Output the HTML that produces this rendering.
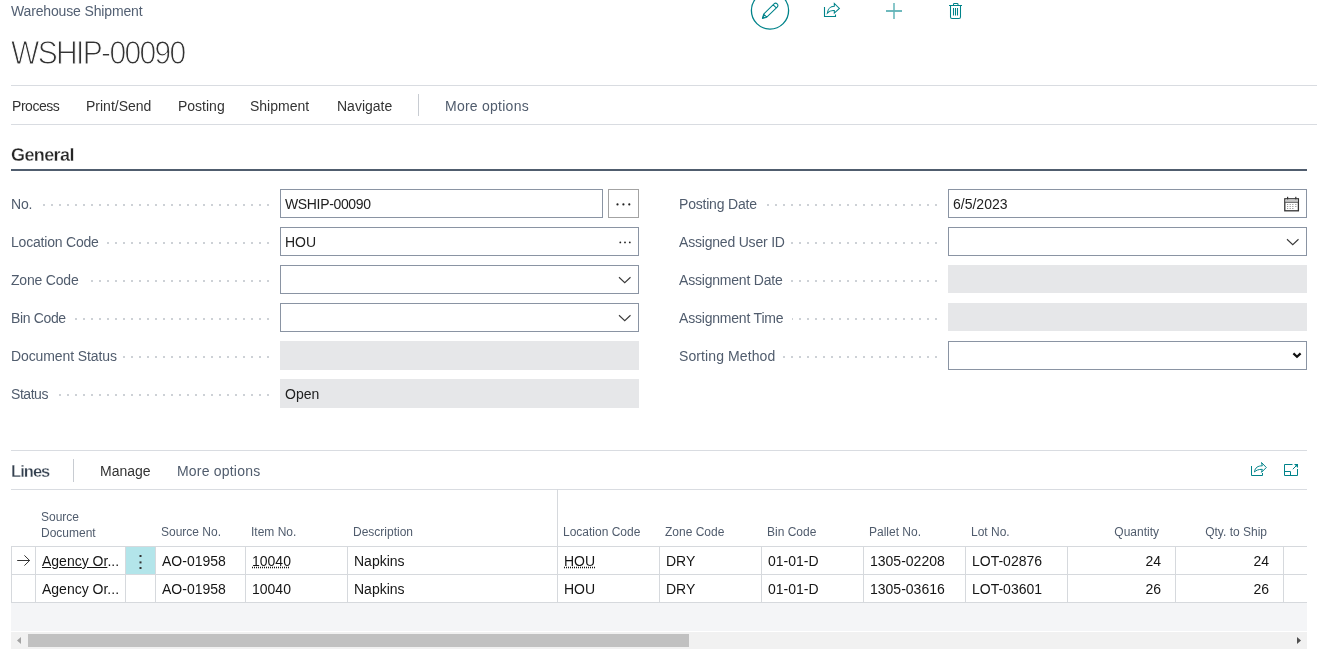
<!DOCTYPE html>
<html><head><meta charset="utf-8">
<style>
*{box-sizing:border-box;margin:0;padding:0}
html,body{width:1317px;height:662px;overflow:hidden;background:#fff}
body{position:relative;font-family:"Liberation Sans",sans-serif;color:#212121}
.a{position:absolute;white-space:nowrap;line-height:1}
.hl{position:absolute;height:1px;background:#d9dce1}
.lbl{font-size:14px;color:#505c6d}
.dots{position:absolute;height:2px;background:linear-gradient(to right,transparent 6px,#cdd1d6 6px) repeat-x right top;background-size:8px 2px}
.lb{position:absolute;background:#fff;padding-right:7px;letter-spacing:-0.2px;font-size:14px;color:#505c6d;line-height:1;white-space:nowrap}
.box{position:absolute;height:29px;border:1px solid #8a94a3;background:#fff}
.ro{position:absolute;height:29px;background:#e6e7e9}
.val{position:absolute;font-size:14px;color:#212121;line-height:1;white-space:nowrap}
.menu{font-size:14px;color:#333}
.gl{position:absolute;background:#d6d9dd}
.th{position:absolute;font-size:12px;color:#505c6d;line-height:1;white-space:nowrap}
.td{position:absolute;font-size:14px;color:#151515;line-height:1;white-space:nowrap}
.wrap{position:absolute;left:0;top:0;width:1317px;height:662px;will-change:transform}
</style></head><body><div class="wrap">

<!-- header -->
<div class="a" style="left:11px;top:4px;font-size:14px;letter-spacing:-0.15px;color:#536073">Warehouse Shipment</div>
<div class="a" style="left:11px;top:35.5px;font-size:30px;letter-spacing:-1.65px;color:#333;-webkit-text-stroke:0.9px #fff;transform:scaleY(1.12);transform-origin:0 0">WSHIP-00090</div>

<!-- top action icons -->
<svg style="position:absolute;left:740px;top:0" width="240" height="36" viewBox="740 0 240 36">
  <circle cx="770" cy="10.5" r="18.6" fill="none" stroke="#00838a" stroke-width="1.3"/>
  <path d="M762.4 18.4 L763.64 14.04 L774.04 3.94 A2.2 2.2 0 0 1 777.16 7.06 L766.76 17.16 Z M763.64 14.04 L766.76 17.16 M773.2 4.8 L776.3 7.9" fill="none" stroke="#00838a" stroke-width="1.05" stroke-linejoin="round"/><path d="M762.2 18.6 L763.1 15.5 L765.3 17.7 Z" fill="#00838a"/>
  <path d="M824.5 7 V16.5 H835.5 V14.5" fill="none" stroke="#00838a" stroke-width="1.1"/>
  <path d="M827.3 13.2 C827.6 9.3 830.3 6.3 834.3 6.3 L834.3 3.4 L839.4 8.5 L834.3 13.1 L834.3 10.6 C831.3 10.3 829 11.3 827.3 13.2 Z" fill="none" stroke="#00838a" stroke-width="1.05" stroke-linejoin="miter"/>
  <path d="M886 11 H902" fill="none" stroke="#3ea2a7" stroke-width="1.5"/><path d="M894 3 V19" fill="none" stroke="#62b5b9" stroke-width="1.5"/>
  <path d="M949 5.5 H962 M953.5 5.5 V4.3 Q953.5 3.5 954.3 3.5 H957.2 Q958 3.5 958 4.3 V5.5 M950.5 5.5 V17 Q950.5 18.5 952 18.5 H959 Q960.5 18.5 960.5 17 V5.5 M953.5 8 V15.6 M955.5 8 V15.6 M957.5 8 V15.6" fill="none" stroke="#00838a" stroke-width="1.05"/>
</svg>

<div class="hl" style="left:11px;top:85px;width:1306px"></div>
<div class="hl" style="left:11px;top:124px;width:1306px"></div>

<!-- menu -->
<div class="a menu" style="left:12px;top:99px;letter-spacing:-0.45px">Process</div>
<div class="a menu" style="left:86px;top:99px">Print/Send</div>
<div class="a menu" style="left:178px;top:99px">Posting</div>
<div class="a menu" style="left:250px;top:99px">Shipment</div>
<div class="a menu" style="left:337px;top:99px">Navigate</div>
<div style="position:absolute;left:418px;top:94px;width:1px;height:22px;background:#c8ccd2"></div>
<div class="a menu" style="left:445px;top:99px;color:#505c6d;letter-spacing:0.25px">More options</div>

<!-- General -->
<div class="a" style="left:11px;top:146px;font-size:18px;font-weight:bold;color:#262626;letter-spacing:-0.6px;-webkit-text-stroke:0.3px #fff">General</div>
<div style="position:absolute;left:11px;top:169px;width:1296px;height:2px;background:#505d6e"></div>


<!-- fields left -->
<div class="dots" style="left:11px;top:204px;width:258px"></div>
<div class="lb" style="left:11px;top:197px;width:28px;height:16px">No.</div>
<div class="dots" style="left:11px;top:242px;width:258px"></div>
<div class="lb" style="left:11px;top:235px;width:95px;height:16px">Location Code</div>
<div class="dots" style="left:11px;top:280px;width:258px"></div>
<div class="lb" style="left:11px;top:273px;width:75px;height:16px">Zone Code</div>
<div class="dots" style="left:11px;top:318px;width:258px"></div>
<div class="lb" style="left:11px;top:311px;width:62px;height:16px;letter-spacing:-0.35px">Bin Code</div>
<div class="dots" style="left:11px;top:356px;width:258px"></div>
<div class="lb" style="left:11px;top:349px;width:112px;height:16px;letter-spacing:-0.1px">Document Status</div>
<div class="dots" style="left:11px;top:394px;width:258px"></div>
<div class="lb" style="left:11px;top:387px;width:44px;height:16px;letter-spacing:-0.45px">Status</div>

<div class="box" style="left:280px;top:189px;width:323px"></div>
<div class="val" style="left:285px;top:197px;letter-spacing:-0.35px">WSHIP-00090</div>
<div class="box" style="left:608px;top:189px;width:31px;border-color:#a3a3a3"></div>
<svg class="ic" style="position:absolute;left:608px;top:189px" width="31" height="29">
 <circle cx="9.5" cy="15.4" r="1.1" fill="#222"/><circle cx="15.4" cy="15.4" r="1.1" fill="#222"/><circle cx="21.3" cy="15.4" r="1.1" fill="#222"/>
</svg>

<div class="box" style="left:280px;top:227px;width:359px"></div>
<div class="val" style="left:285px;top:235px">HOU</div>
<svg style="position:absolute;left:608px;top:227px" width="31" height="29">
 <circle cx="12.3" cy="15.4" r="0.9" fill="#222"/><circle cx="17" cy="15.4" r="0.9" fill="#222"/><circle cx="21.8" cy="15.4" r="0.9" fill="#222"/>
</svg>

<div class="box" style="left:280px;top:265px;width:359px"></div>
<svg style="position:absolute;left:608px;top:265px" width="31" height="29">
 <polyline points="11,12.25 16.75,17.75 22.5,12.25" fill="none" stroke="#3a3a3a" stroke-width="1.1"/>
</svg>
<div class="box" style="left:280px;top:303px;width:359px"></div>
<svg style="position:absolute;left:608px;top:303px" width="31" height="29">
 <polyline points="11,12.25 16.75,17.75 22.5,12.25" fill="none" stroke="#3a3a3a" stroke-width="1.1"/>
</svg>
<div class="ro" style="left:280px;top:341px;width:359px"></div>
<div class="ro" style="left:280px;top:379px;width:359px"></div>
<div class="val" style="left:285px;top:387px">Open</div>

<!-- fields right -->
<div class="dots" style="left:679px;top:204px;width:258px"></div>
<div class="lb" style="left:679px;top:197px;width:85px;height:16px">Posting Date</div>
<div class="dots" style="left:679px;top:242px;width:258px"></div>
<div class="lb" style="left:679px;top:235px;width:112px;height:16px">Assigned User ID</div>
<div class="dots" style="left:679px;top:280px;width:258px"></div>
<div class="lb" style="left:679px;top:273px;width:112px;height:16px">Assignment Date</div>
<div class="dots" style="left:679px;top:318px;width:258px"></div>
<div class="lb" style="left:679px;top:311px;width:113px;height:16px">Assignment Time</div>
<div class="dots" style="left:679px;top:356px;width:258px"></div>
<div class="lb" style="left:679px;top:349px;width:104px;height:16px;letter-spacing:0.1px">Sorting Method</div>

<div class="box" style="left:948px;top:189px;width:359px"></div>
<div class="val" style="left:953px;top:197px">6/5/2023</div>
<svg style="position:absolute;left:1282px;top:195px" width="20" height="18" viewBox="0 0 20 18">
 <rect x="2.8" y="3.8" width="13.6" height="12" fill="none" stroke="#333" stroke-width="1.3"/>
 <rect x="3.4" y="4.4" width="12.4" height="2.4" fill="#c8c8c8"/>
 <rect x="3" y="6.8" width="13.2" height="1" fill="#555"/>
 <rect x="5" y="1.8" width="1.2" height="2.6" fill="#333"/><rect x="13.2" y="1.8" width="1.2" height="2.6" fill="#333"/>
 <g fill="#999"><rect x="5" y="9" width="1.2" height="1"/><rect x="7.6" y="9" width="1.2" height="1"/><rect x="10.2" y="9" width="1.2" height="1"/><rect x="13.2" y="9" width="1.2" height="1"/>
 <rect x="5" y="11" width="1.2" height="1"/><rect x="7.6" y="11" width="1.2" height="1"/><rect x="10.2" y="11" width="1.2" height="1"/><rect x="13.2" y="11" width="1.2" height="1"/>
 <rect x="5" y="13" width="1.2" height="1"/><rect x="7.6" y="13" width="1.2" height="1"/><rect x="10.2" y="13" width="1.2" height="1"/></g>
</svg>
<div class="box" style="left:948px;top:227px;width:359px"></div>
<svg style="position:absolute;left:1276px;top:227px" width="31" height="29">
 <polyline points="11,12.25 16.75,17.75 22.5,12.25" fill="none" stroke="#3a3a3a" stroke-width="1.1"/>
</svg>
<div class="ro" style="left:948px;top:265px;width:359px;height:28px"></div>
<div class="ro" style="left:948px;top:303px;width:359px;height:28px"></div>
<div class="box" style="left:948px;top:341px;width:359px"></div>
<svg style="position:absolute;left:1276px;top:341px" width="31" height="29">
 <polyline points="17.4,12.4 21,15.8 24.6,12.4" fill="none" stroke="#111" stroke-width="2.2"/>
</svg>


<!-- Lines section -->
<div class="hl" style="left:11px;top:450px;width:1296px"></div>
<div class="hl" style="left:11px;top:489px;width:1296px"></div>
<div class="a" style="left:11px;top:463px;font-size:16.5px;font-weight:bold;letter-spacing:-0.95px;color:#34404f;-webkit-text-stroke:0.3px #fff">Lines</div>
<div style="position:absolute;left:73px;top:459px;width:1px;height:23px;background:#c8ccd2"></div>
<div class="a menu" style="left:100px;top:464px">Manage</div>
<div class="a menu" style="left:177px;top:464px;color:#505c6d;letter-spacing:0.2px">More options</div>
<svg style="position:absolute;left:1240px;top:455px" width="70" height="30" viewBox="1240 455 70 30">
 <path d="M1251.5 466 V475.5 H1262.5 V473" fill="none" stroke="#00838a" stroke-width="1"/>
 <path d="M1254.5 472 C1255 467.5 1258 465.8 1262.3 465.8 L1261.5 462.5 L1266.3 467.5 L1261.5 472.3 L1262.3 469.3 C1258.5 469.3 1256 470.3 1254.5 472 Z" fill="none" stroke="#00838a" stroke-width="1"/>
 <path d="M1292.5 464.5 H1284.5 V475.5 H1297.5 V469" fill="none" stroke="#00838a" stroke-width="1"/>
 <path d="M1284.5 471.5 H1290.5 V475.5" fill="none" stroke="#00838a" stroke-width="1"/>
 <path d="M1292.8 469.2 L1296 466" fill="none" stroke="#00838a" stroke-width="1"/>
 <path d="M1294 464 H1298 V468 Z" fill="#00838a"/>
</svg>

<!-- table header -->
<div class="th" style="left:41px;top:511px">Source</div>
<div class="th" style="left:41px;top:527px">Document</div>
<div class="th" style="left:161px;top:526px">Source No.</div>
<div class="th" style="left:251px;top:526px">Item No.</div>
<div class="th" style="left:353px;top:526px">Description</div>
<div class="th" style="left:563px;top:526px">Location Code</div>
<div class="th" style="left:665px;top:526px">Zone Code</div>
<div class="th" style="left:767px;top:526px">Bin Code</div>
<div class="th" style="left:869px;top:526px">Pallet No.</div>
<div class="th" style="left:971px;top:526px">Lot No.</div>
<div class="th" style="left:1060px;top:526px;width:99px;text-align:right">Quantity</div>
<div class="th" style="left:1168px;top:526px;width:99px;text-align:right">Qty. to Ship</div>

<!-- grid -->
<div class="gl" style="left:557px;top:489px;width:1px;height:114px"></div>
<div class="gl" style="left:11px;top:546px;width:1296px;height:1px"></div>
<div class="gl" style="left:11px;top:574px;width:1296px;height:1px"></div>
<div class="gl" style="left:11px;top:602px;width:1296px;height:1px"></div>
<div class="gl" style="left:11px;top:546px;width:1px;height:57px"></div>
<div class="gl" style="left:35px;top:546px;width:1px;height:57px"></div>
<div class="gl" style="left:125px;top:546px;width:1px;height:57px"></div>
<div class="gl" style="left:155px;top:546px;width:1px;height:57px"></div>
<div class="gl" style="left:245px;top:546px;width:1px;height:57px"></div>
<div class="gl" style="left:347px;top:546px;width:1px;height:57px"></div>
<div class="gl" style="left:659px;top:546px;width:1px;height:57px"></div>
<div class="gl" style="left:761px;top:546px;width:1px;height:57px"></div>
<div class="gl" style="left:863px;top:546px;width:1px;height:57px"></div>
<div class="gl" style="left:965px;top:546px;width:1px;height:57px"></div>
<div class="gl" style="left:1067px;top:546px;width:1px;height:57px"></div>
<div class="gl" style="left:1175px;top:546px;width:1px;height:57px"></div>
<div class="gl" style="left:1283px;top:546px;width:1px;height:57px"></div>
<div style="position:absolute;left:126px;top:547px;width:29px;height:27px;background:#b3e5ea"></div>
<svg style="position:absolute;left:126px;top:547px" width="29" height="27">
 <rect x="13.5" y="8" width="2" height="2" fill="#333"/><rect x="13.5" y="14.4" width="2" height="2" fill="#333"/><rect x="13.5" y="20" width="2" height="2" fill="#333"/>
</svg>
<svg style="position:absolute;left:12px;top:547px" width="23" height="27">
 <path d="M5.2 13.5 H17.6 M12.4 8.4 L17.6 13.5 L12.4 18.6" fill="none" stroke="#2a2a2a" stroke-width="0.95"/>
</svg>

<!-- rows -->
<div class="td" style="left:42px;top:554px"><span style="text-decoration:underline">Agency Or</span>...</div>
<div class="td" style="left:162px;top:554px">AO-01958</div>
<div class="td" style="left:252px;top:554px;text-decoration:underline dotted;text-underline-offset:0.6px">10040</div>
<div class="td" style="left:354px;top:554px">Napkins</div>
<div class="td" style="left:564px;top:554px;text-decoration:underline dotted;text-underline-offset:0.6px">HOU</div>
<div class="td" style="left:666px;top:554px">DRY</div>
<div class="td" style="left:768px;top:554px">01-01-D</div>
<div class="td" style="left:870px;top:554px">1305-02208</div>
<div class="td" style="left:972px;top:554px">LOT-02876</div>
<div class="td" style="left:1060px;top:554px;width:101px;text-align:right">24</div>
<div class="td" style="left:1168px;top:554px;width:101px;text-align:right">24</div>

<div class="td" style="left:42px;top:582px">Agency Or...</div>
<div class="td" style="left:162px;top:582px">AO-01958</div>
<div class="td" style="left:252px;top:582px">10040</div>
<div class="td" style="left:354px;top:582px">Napkins</div>
<div class="td" style="left:564px;top:582px">HOU</div>
<div class="td" style="left:666px;top:582px">DRY</div>
<div class="td" style="left:768px;top:582px">01-01-D</div>
<div class="td" style="left:870px;top:582px">1305-03616</div>
<div class="td" style="left:972px;top:582px">LOT-03601</div>
<div class="td" style="left:1060px;top:582px;width:101px;text-align:right">26</div>
<div class="td" style="left:1168px;top:582px;width:101px;text-align:right">26</div>

<!-- below grid -->
<div style="position:absolute;left:11px;top:603px;width:1296px;height:28px;background:#f4f5f7"></div>
<div style="position:absolute;left:11px;top:632px;width:1296px;height:17px;background:#f1f1f1"></div>
<div style="position:absolute;left:28px;top:634px;width:661px;height:13px;background:#c1c1c1"></div>
<svg style="position:absolute;left:11px;top:632px" width="17" height="17"><path d="M6 8.5 L10 5 V12 Z" fill="#a3a3a3"/></svg>
<svg style="position:absolute;left:1290px;top:632px" width="17" height="17"><path d="M11 8.5 L7 5 V12 Z" fill="#505050"/></svg>

</div></body></html>
